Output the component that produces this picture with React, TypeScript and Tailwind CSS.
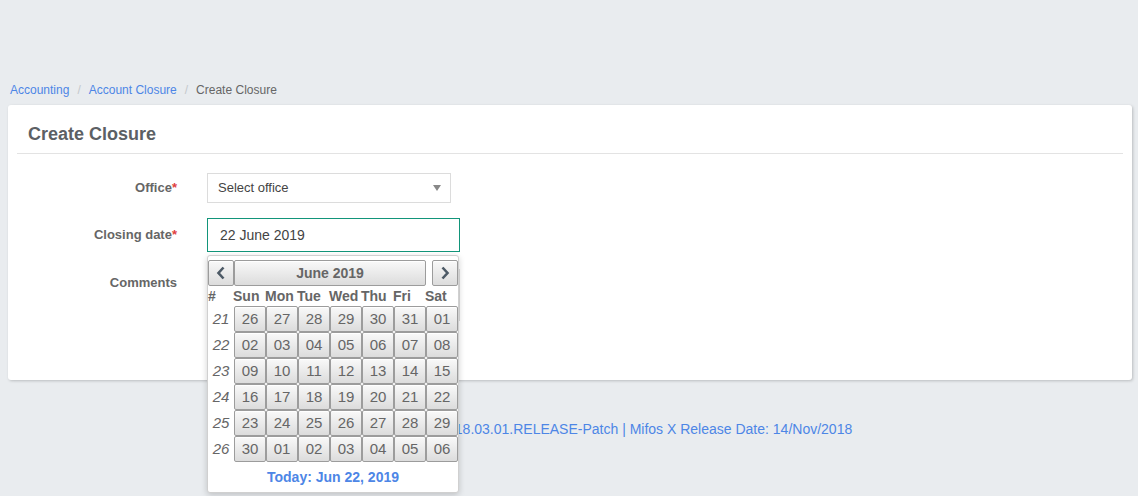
import React from "react";

const WEEKS: { wk: number; days: string[] }[] = [
  { wk: 21, days: ["26", "27", "28", "29", "30", "31", "01"] },
  { wk: 22, days: ["02", "03", "04", "05", "06", "07", "08"] },
  { wk: 23, days: ["09", "10", "11", "12", "13", "14", "15"] },
  { wk: 24, days: ["16", "17", "18", "19", "20", "21", "22"] },
  { wk: 25, days: ["23", "24", "25", "26", "27", "28", "29"] },
  { wk: 26, days: ["30", "01", "02", "03", "04", "05", "06"] },
];

const DAY_NAMES = ["Sun", "Mon", "Tue", "Wed", "Thu", "Fri", "Sat"];

const btn =
  "flex items-center justify-center border border-[#9c9c9c] rounded-[2px] bg-linear-to-b from-[#f9f9f9] to-[#dcdcdc] shadow-[inset_0_1px_0_#ffffff] text-[#666]";

function DatePopup() {
  return (
    <div className="absolute left-0 top-[37px] z-10 w-[252px] rounded-[3px] border border-[#d0d0d0] bg-white shadow-[0_2px_6px_rgba(0,0,0,0.18)]">
      <div className="grid grid-cols-[26px_repeat(7,32px)]">
        {/* header */}
        <div className="col-span-1 pt-[4px]">
          <div className={`${btn} h-[26px] w-[26px]`}>
            <svg width="10" height="14" viewBox="0 0 10 14">
              <path d="M7.5 1.5 L2.5 7 L7.5 12.5" fill="none" stroke="#4d5a66" strokeWidth="2.6" />
            </svg>
          </div>
        </div>
        <div className="col-span-6 pt-[4px]">
          <div className={`${btn} h-[26px] w-[192px] text-[14px] font-bold`}>June 2019</div>
        </div>
        <div className="col-span-1 flex justify-end pt-[4px]">
          <div className={`${btn} h-[26px] w-[26px]`}>
            <svg width="10" height="14" viewBox="0 0 10 14">
              <path d="M2.5 1.5 L7.5 7 L2.5 12.5" fill="none" stroke="#4d5a66" strokeWidth="2.6" />
            </svg>
          </div>
        </div>

        {/* day names */}
        <div className="h-[20px] text-[14px] font-bold leading-[20px] text-[#666]">#</div>
        {DAY_NAMES.map((d) => (
          <div key={d} className="-ml-[1px] h-[20px] text-[14px] font-bold leading-[20px] text-[#666]">
            {d}
          </div>
        ))}

        {WEEKS.map((w) => (
          <React.Fragment key={w.wk}>
            <div className="flex h-[26px] items-center justify-center text-[15px] italic text-[#666]">
              {w.wk}
            </div>
            {w.days.map((d, i) => (
              <div key={i} className={`${btn} h-[26px] w-[32px] text-[15px]`}>
                {d}
              </div>
            ))}
          </React.Fragment>
        ))}
      </div>
      <div className="flex h-[30px] items-center justify-center text-[14px] font-bold text-[#4d86e6]">
        Today: Jun 22, 2019
      </div>
    </div>
  );
}

export default function App() {
  return (
    <div className="min-h-[496px] bg-[#e9ecef] font-['Liberation_Sans',Arial,sans-serif]">
      <div className="h-[81px]" />

      <nav className="flex items-center px-[10px] text-[12px] leading-[18px]">
        <span className="text-[#4d86e6]">Accounting</span>
        <span className="px-[8px] text-[#c4c8cc]">/</span>
        <span className="text-[#4d86e6]">Account Closure</span>
        <span className="px-[8px] text-[#c4c8cc]">/</span>
        <span className="text-[#666]">Create Closure</span>
      </nav>

      <div className="ml-[8px] mr-[6px] mt-[6px] h-[275px] rounded-[3px] bg-white shadow-[1px_1px_3px_rgba(0,0,0,0.2)]">
        <div className="mx-[9px] border-b border-[#e3e3e3] pb-[8px] pl-[11px] pt-[18px]">
          <h2 className="text-[18px] font-bold leading-[22px] text-[#5c6064]">Create Closure</h2>
        </div>

        <div className="pt-[19px]">
          <div className="flex items-center">
            <label className="w-[169px] text-right text-[13px] font-bold text-[#666]">
              Office<span className="text-[#e0413e]">*</span>
            </label>
            <div className="ml-[30px] flex h-[30px] w-[244px] items-center justify-between border border-[#dcdcdc] bg-white pl-[10px] pr-[9px] text-[13px] text-[#444]">
              <span>Select office</span>
              <svg width="8" height="6" viewBox="0 0 8 6">
                <path d="M0 0 L8 0 L4 6 Z" fill="#888" />
              </svg>
            </div>
          </div>

          <div className="mt-[15px] flex items-center">
            <label className="w-[169px] text-right text-[13px] font-bold text-[#666]">
              Closing date<span className="text-[#e0413e]">*</span>
            </label>
            <div className="relative ml-[30px]">
              <div className="flex h-[34px] w-[253px] items-center border border-[#12957a] pl-[12px] text-[14px] text-[#444]">
                22 June 2019
              </div>
              <DatePopup />
            </div>
          </div>

          <div className="mt-[17px] flex items-start">
            <label className="w-[169px] pt-[4px] text-right text-[13px] font-bold text-[#666]">
              Comments
            </label>
            <div className="ml-[30px] h-[52px] w-[253px] border border-[#dcdcdc]" />
          </div>
        </div>
      </div>

      <footer className="pl-[64px] pt-[39px] text-center text-[14px] text-[#4d86e6]">
        Mifos X Version: 18.03.01.RELEASE-Patch | Mifos X Release Date: 14/Nov/2018
      </footer>
    </div>
  );
}
